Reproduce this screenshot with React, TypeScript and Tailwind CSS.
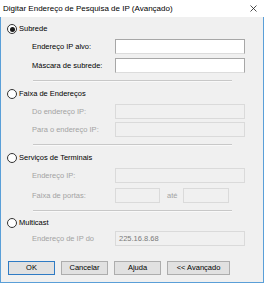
import type { ReactNode } from "react";

const font = { fontFamily: '"Liberation Sans", Arial, sans-serif' };

function Radio({ label, checked = false }: { label: string; checked?: boolean }) {
  return (
    <div className="flex h-[12px] items-center">
      <span className="ml-[6px] flex size-[10px] items-center justify-center rounded-full border border-[#333333] bg-white">
        {checked ? <span className="size-[5px] rounded-full bg-[#1a1a1a]" /> : null}
      </span>
      <span className="ml-[2px] text-[7.5px] leading-none text-black">{label}</span>
    </div>
  );
}

function Field({
  label,
  disabled = false,
  value,
  className = "mt-[4px]",
}: {
  label: string;
  disabled?: boolean;
  value?: string;
  className?: string;
}) {
  return (
    <div className={`flex h-[15px] items-center ${className}`}>
      <span
        className={`w-[114px] shrink-0 pl-[31px] text-[7.5px] leading-none whitespace-nowrap ${
          disabled ? "text-[#a3a3a3]" : "text-black"
        }`}
      >
        {label}
      </span>
      <Box disabled={disabled} className="w-[130px]">
        {value}
      </Box>
    </div>
  );
}

function Box({
  disabled,
  className,
  children,
}: {
  disabled?: boolean;
  className: string;
  children?: ReactNode;
}) {
  return (
    <div
      className={`flex h-[15px] shrink-0 items-center pl-[3px] text-[7.5px] leading-none text-[#7a7a7a] ${className} ${
        disabled
          ? "border border-[#dadada] bg-[#f0f0f0]"
          : "border border-[#a7a7a7] border-b-[#dcdcdc] bg-white"
      }`}
    >
      {children}
    </div>
  );
}

function Separator({ className = "mt-[7px]" }: { className?: string }) {
  return (
    <div className={`ml-[32px] w-[199px] ${className}`}>
      <div className="h-px bg-[#c8c8c8]" />
      <div className="h-px bg-white/60" />
    </div>
  );
}

function Button({ label, primary = false, width }: { label: string; primary?: boolean; width: string }) {
  return (
    <div
      className={`flex h-[14px] items-center justify-center bg-[#e1e1e1] text-[7.5px] leading-none text-black ${width} ${
        primary ? "border border-[#2f7bc4]" : "border border-[#adadad]"
      }`}
    >
      {label}
    </div>
  );
}

export default function App() {
  return (
    <div className="flex h-[283px] w-[264px] flex-col bg-[#f0f0f0]" style={font}>
      {/* title bar */}
      <div className="flex h-[17px] shrink-0 items-center justify-between bg-white pl-[3px] pr-[7px]">
        <span className="text-[8px] leading-none text-black">
          Digitar Endereço de Pesquisa de IP (Avançado)
        </span>
        <svg width="7" height="7" viewBox="0 0 7 7" className="mt-[-1px]">
          <path d="M0.5 0.5 L6.5 6.5 M6.5 0.5 L0.5 6.5" stroke="#222" strokeWidth="0.8" fill="none" />
        </svg>
      </div>

      <div className="flex flex-1 flex-col border-x border-b border-[#5a9fd8]">
        <div className="mt-[6px]">
          <Radio label="Subrede" checked />
        </div>
        <Field label="Endereço IP alvo:" />
        <Field label="Máscara de subrede:" />
        <Separator />

        <div className="mt-[6px]">
          <Radio label="Faixa de Endereços" />
        </div>
        <Field label="Do endereço IP:" disabled />
        <Field label="Para o endereço IP:" disabled className="mt-[3px]" />
        <Separator />

        <div className="mt-[6px]">
          <Radio label="Serviços de Terminais" />
        </div>
        <Field label="Endereço IP:" disabled />
        <div className="mt-[5px] flex h-[15px] items-center">
          <span className="w-[114px] shrink-0 pl-[31px] text-[7.5px] leading-none whitespace-nowrap text-[#a3a3a3]">
            Faixa de portas:
          </span>
          <Box disabled className="w-[45px]" />
          <span className="ml-[7px] w-[16px] shrink-0 text-[7.5px] leading-none text-[#a3a3a3]">até</span>
          <Box disabled className="w-[46px]" />
        </div>
        <Separator />

        <div className="mt-[5px]">
          <Radio label="Multicast" />
        </div>
        <Field label="Endereço de IP do" disabled value="225.16.8.68" className="mt-[2px]" />

        <div className="mt-[15px] flex gap-[6px] pl-[7px]">
          <Button label="OK" primary width="w-[47px]" />
          <Button label="Cancelar" width="w-[47px]" />
          <Button label="Ajuda" width="w-[47px]" />
          <Button label="<< Avançado" width="w-[63px]" />
        </div>
      </div>
    </div>
  );
}
